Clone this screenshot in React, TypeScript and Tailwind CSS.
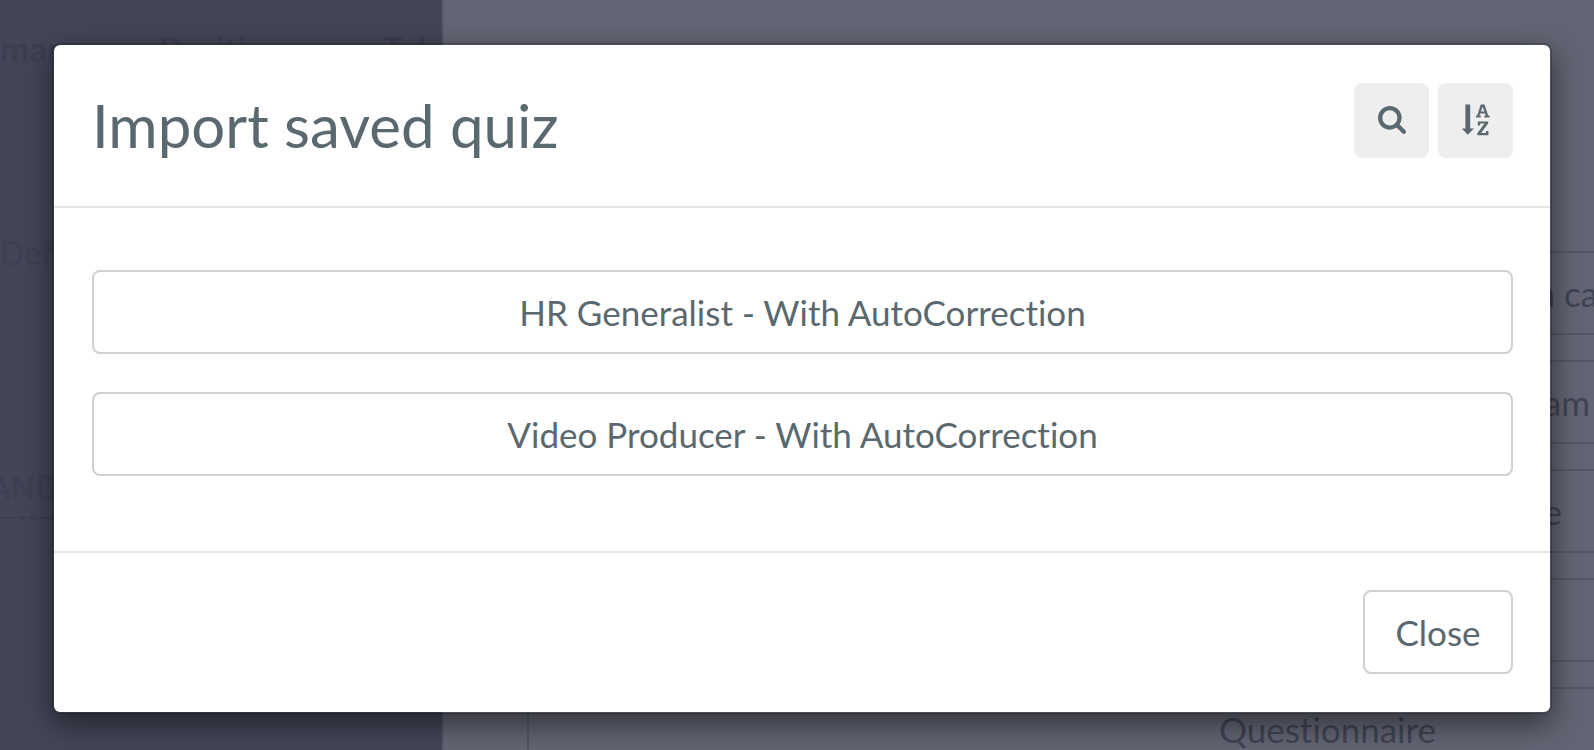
const quizzes = [
  'HR Generalist - With AutoCorrection',
  'Video Producer - With AutoCorrection',
]

// Visible ends of the cards in the page behind the dialog
const pageRows = [
  { text: 'n ca', inset: 'pr-1' },
  { text: 'am', inset: 'pr-3' },
  { text: 'e', inset: 'pr-10' },
  { text: '', inset: 'pr-1' },
  { text: 'Questionnaire', inset: 'pr-[166px]' },
]

function SearchIcon() {
  return (
    <svg width="28" height="28" viewBox="64 128 1664 1664" fill="currentColor" aria-hidden="true">
      <path d="M1216 832q0-185-131.500-316.500t-316.500-131.500-316.500 131.500-131.500 316.500 131.500 316.500 316.500 131.500 316.500-131.500 131.500-316.500zm512 832q0 52-38 90t-90 38q-54 0-90-38l-343-342q-179 124-399 124-143 0-273.500-55.500t-225-150-150-225-55.500-273.500 55.500-273.500 150-225 225-150 273.500-55.500 273.500 55.500 225 150 150 225 55.500 273.500q0 220-124 399l343 343q37 37 37 90z" />
    </svg>
  )
}

function SortAlphaIcon() {
  return (
    <svg width="28" height="32" viewBox="0 0 28 32" fill="currentColor" aria-hidden="true">
      <path d="M3.400 0.500h4.800v24h3.800L5.800 30.800 -0.200 24.500h3.600z" />
      <path
        d="M18.700 0.500h3.800l3.700 11h1.400v2.100h-5.200v-2.100h1.300l-.7-2h-4.900l-.7 2h1.300v2.100h-4.700v-2.100h1.200zM20.600 2.700l-1.700 4.800h3.500z"
        fillRule="evenodd"
      />
      <path d="M15.800 17.400h10.400v2.100l-7.200 9.600h5v-2h2.400v4.200H15.300v-2.100l7.200-9.600h-4.400v2h-2.300z" />
    </svg>
  )
}

function PageBehind() {
  return (
    <div className="absolute inset-0 overflow-hidden flex" aria-hidden="true">
      <aside className="w-[442px] shrink-0 bg-[#444658] overflow-hidden font-bold">
        <div className="h-[129px] pt-7 flex border-b border-[#414355] text-[#3c3f51] text-[35px] leading-10">
          <span className="w-[159px] shrink-0">mary</span>
          <span className="w-[223px] shrink-0">Positions</span>
          <span>Tele</span>
        </div>
        <div className="h-[390px] pt-[100px] border-b-2 border-dashed border-[#3b3e50] text-[#3e4153] text-[32px] flex flex-col justify-between">
          <span>Def</span>
          <span className="pb-[6px] -ml-3">AND</span>
        </div>
      </aside>

      <main className="flex-1 border-l-2 border-[#5a5c6b] bg-[#636574] text-[#3f4453] text-[35px] pl-[83px] pt-[251px] overflow-hidden">
        {/* Cards run past the right edge */}
        <div className="flex flex-col gap-[25px] -mr-2">
          {pageRows.map(({ text, inset }, index) => (
            <div
              key={index}
              className={`h-[84px] shrink-0 border-y-2 border-l-2 border-[#555766] flex items-center justify-end ${inset}`}
            >
              {text}
            </div>
          ))}
        </div>
      </main>
    </div>
  )
}

export default function App() {
  return (
    <div className="relative min-h-screen overflow-hidden font-['Lato',sans-serif] [font-variant-ligatures:none] text-[#5a686f]">
      <PageBehind />

      {/* Dialog */}
      <div className="relative pl-[52px] pr-[42px] pt-[43px] pb-9">
        <section
          role="dialog"
          aria-labelledby="dialog-title"
          className="bg-white bg-clip-padding border-2 border-black/20 rounded-lg shadow-[0_10px_30px_rgba(0,0,0,0.5)]"
        >
          <header className="h-[163px] pl-[38px] pr-[37px] pt-[38px] flex justify-between border-b-2 border-[#e5e5e5]">
            <h1 id="dialog-title" className="text-[60px] leading-[84px]">
              Import saved quiz
            </h1>
            <div className="flex gap-[9px]">
              <button
                aria-label="Search"
                className="size-[75px] pb-[2px] rounded-lg bg-[#eeeeee] flex items-center justify-center"
              >
                <SearchIcon />
              </button>
              <button
                aria-label="Sort alphabetically"
                className="size-[75px] pb-[2px] rounded-lg bg-[#eeeeee] flex items-center justify-center"
              >
                <SortAlphaIcon />
              </button>
            </div>
          </header>

          <div className="pl-[38px] pr-[37px] pt-[62px] pb-[75px] flex flex-col gap-[38px]">
            {quizzes.map((quiz) => (
              <button
                key={quiz}
                className="h-[84px] rounded-lg border-2 border-[#d0d0d0] text-[35px]"
              >
                {quiz}
              </button>
            ))}
          </div>

          <footer className="pl-[38px] pr-[37px] pt-[37px] pb-[38px] flex justify-end border-t-2 border-[#e5e5e5]">
            <button className="h-[84px] w-[150px] rounded-lg border-2 border-[#d0d0d0] text-[35px]">
              Close
            </button>
          </footer>
        </section>
      </div>
    </div>
  )
}
